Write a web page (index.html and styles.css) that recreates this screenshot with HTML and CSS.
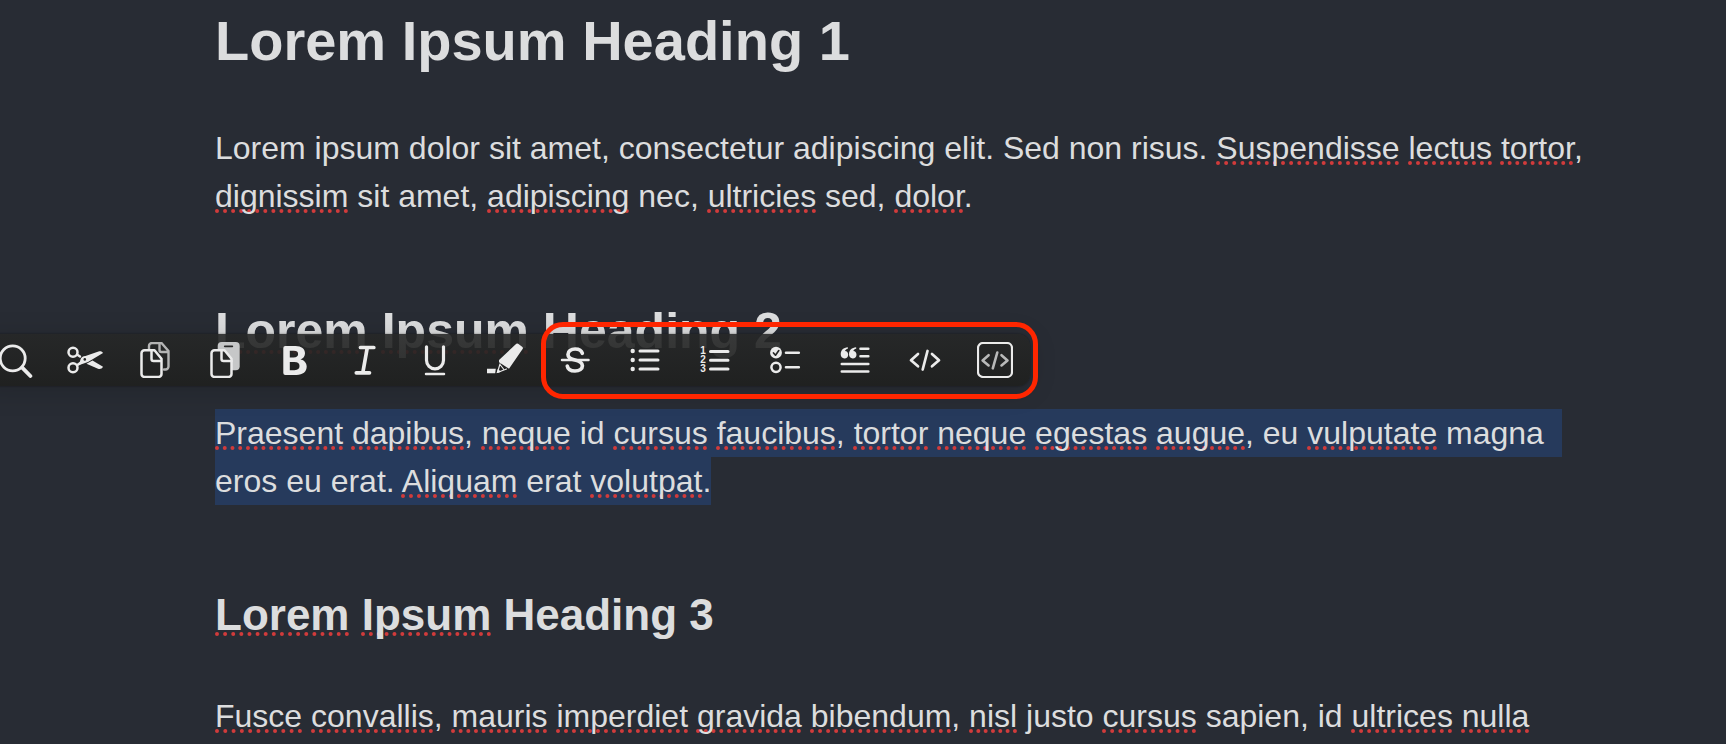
FILE: index.html
```html
<!DOCTYPE html>
<html lang="en">
<head>
<meta charset="utf-8">
<title>Lorem Ipsum</title>
<link rel="stylesheet" href="styles.css">
</head>
<body>
<main class="note">
  <h1>Lorem Ipsum Heading 1</h1>
  <p>Lorem ipsum dolor sit amet, consectetur adipiscing elit. Sed non risus. <span class="sp">Suspendisse</span> <span class="sp">lectus</span> <span class="sp">tortor</span>, <span class="sp">dignissim</span> sit amet, <span class="sp">adipiscing</span> nec, <span class="sp">ultricies</span> sed, <span class="sp">dolor</span>.</p>
  <section class="anchor">
    <h2><span class="sp">Lorem</span> <span class="sp">Ipsum</span> Heading 2</h2>
    <div class="toolbar" role="toolbar" aria-label="Formatting">
      <button type="button" aria-label="Search"><svg viewBox="0 0 36 36"><circle cx="15.7" cy="16.3" r="12.5" stroke-width="2.8"/><path d="M25.2 25.6l8.2 8.4" stroke-width="3.8"/></svg></button>
      <button type="button" aria-label="Cut"><svg viewBox="0 0 36 36"><circle cx="6" cy="10.3" r="4.5" stroke-width="2.5"/><circle cx="6" cy="25.7" r="4.5" stroke-width="2.5"/><path d="M10 12.6l3 2M10 23.2l5-3.400" stroke-width="2.4"/><path class="fill" d="M13.5 17.6C14 15.3 16 14 18.500 14L31.500 9.500C33.500 9 35.300 9.500 36 11L21 20 14.500 22.300 11.500 23.500 12.500 20.800z"/><path class="fill" d="M19.500 21.700L25.500 18.500 36 24.800C35 26.800 33 27.300 31 26.700z"/><circle cx="17.800" cy="17.400" r="1.300" class="dark"/></svg></button>
      <button type="button" aria-label="Copy"><svg viewBox="0 0 36 36"><g opacity=".72"><path d="M12 7V4a3 3 0 0 1 3-3h9.500l7 8v15.500a3 3 0 0 1-3 3H27M22.500 2v6a2 2 0 0 0 2 2h6" stroke-width="2.400"/></g><path d="M7.500 8.300h10l7 8.500V32a3 3 0 0 1-3 3h-14a3 3 0 0 1-3-3V11.300a3 3 0 0 1 3-3zM14.500 9v8a2 2 0 0 0 2 2h8" stroke-width="2.500"/></svg></button>
      <button type="button" aria-label="Paste"><svg viewBox="0 0 36 36"><rect x="10.700" y="0" width="22" height="28.300" rx="4" class="soft"/><path d="M17.800 4.300h7.500" class="darkline" stroke-width="1.800"/><path d="M7.500 8.300h10l7 8.500V32a3 3 0 0 1-3 3h-14a3 3 0 0 1-3-3V11.300a3 3 0 0 1 3-3z" class="panel" stroke-width="2.500"/><path d="M14.500 9v8a2 2 0 0 0 2 2h8" stroke-width="2.500"/></svg></button>
      <button type="button" aria-label="Bold"><svg viewBox="0 0 36 36"><path class="fill" fill-rule="evenodd" d="M8.300 4H18.500C24.500 4 28 7 28 11.300c0 3-1.800 5.300-4.600 6.200 3.900.6 6.300 3.500 6.300 7.100 0 5.200-3.800 8.400-10.200 8.400H8.300a2 2 0 0 1-2-2V6a2 2 0 0 1 2-2zM12.800 8.700v6.800h3.700c3.200 0 4.600-1.200 4.600-3.500 0-2.200-1.400-3.300-4.200-3.300zM12.800 20v8.200h4.700c3.500 0 5-1.400 5-4.100 0-2.800-1.600-4.100-5.200-4.100z"/></svg></button>
      <button type="button" aria-label="Italic"><svg viewBox="0 0 36 36"><path d="M13.500 5.500h13.300M9.300 30.800h13.200M20.300 5.500l-4.500 25.300" stroke-width="3.700"/></svg></button>
      <button type="button" aria-label="Underline"><svg viewBox="0 0 36 36"><path d="M9.500 4.800v13.500a8.500 8.500 0 0 0 17 0V4.800" stroke-width="3.200"/><path d="M9 31.900h18" stroke-width="2.500"/></svg></button>
      <button type="button" aria-label="Highlight"><svg viewBox="0 0 36 36"><path class="fill" d="M29.300 1.800q.9-.8 1.900 0l4.200 3.300q.9.900.2 1.900L22 26.700 12 20.300V18zM0 26.800h8.800l-.6 4.500H0z"/><path d="M13 21.800l-2.500 8.700L19.500 27M13 22.500l3.500 4.500" stroke-width="1.200"/><path class="fill" d="M9.500 31.300l1.300-4.300 3.400 2.800z"/></svg></button>
      <button type="button" aria-label="Strikethrough"><svg viewBox="0 0 36 36"><path d="M25.300 11.300C24.600 8.700 21.800 7 18.200 7c-4.200 0-7.200 2.100-7.200 5.400 0 3.300 2.800 4.600 7 5.600 4.600 1.100 7.400 2.400 7.400 5.700S22.300 29 18 29c-4.200 0-7.200-1.900-7.700-5" stroke-width="3.700"/><path d="M5 18h26.500" stroke-width="2.500"/></svg></button>
      <button type="button" aria-label="Bullet list"><svg viewBox="0 0 36 36"><path d="M13 9h18M13 18h18M13 27h18" stroke-width="3"/><g class="fill"><circle cx="5.700" cy="9" r="2.200"/><circle cx="5.700" cy="18" r="2.200"/><circle cx="5.700" cy="27" r="2.200"/></g></svg></button>
      <button type="button" aria-label="Numbered list"><svg viewBox="0 0 36 36"><path d="M13.500 9.500h17.500M13.500 18.300h17.500M13.500 27h17.500" stroke-width="3"/><g class="digits"><text x="6" y="12">1</text><text x="6" y="21">2</text><text x="6" y="30">3</text></g></svg></button>
      <button type="button" aria-label="Task list"><svg viewBox="0 0 36 36"><circle class="fill" cx="9" cy="10.700" r="5.900"/><path class="darkline" d="M6.500 11l2 2.200 3.300-4.600" stroke-width="1.700"/><circle cx="9" cy="25.300" r="4.600" stroke-width="2.500"/><path d="M19 10.700h12.800M19 25.300h12.800" stroke-width="2.600"/></svg></button>
      <button type="button" aria-label="Quote"><svg viewBox="0 0 36 36"><path d="M23.500 6.700h7.800M23.500 14.300h7.800M4.800 22h26.500M4.800 29.500h26.500" stroke-width="2.600"/><path id="quote-mark" class="fill" d="M10.800 5.300C6.500 5.600 3.700 8.300 3.700 12.300c0 2.500 1.600 4.100 3.700 4.100 2.200 0 3.800-1.600 3.800-3.700 0-2-1.300-3.500-3.200-3.600.4-1.200 1.400-2 3-2.500z"/><use href="#quote-mark" x="8.300"/></svg></button>
      <button type="button" aria-label="Code"><svg viewBox="0 0 36 36"><path d="M11 12l-7 6.300 7 6M25 12l7 6.300-7 6M20.500 9l-4.800 18.500" stroke-width="2.700"/></svg></button>
      <button type="button" aria-label="Code block"><svg viewBox="0 0 36 36"><rect x="1" y="1" width="34" height="34" rx="5" stroke-width="2.200"/><path opacity=".75" d="M11.600 13.200l-6 5.200 6 5M24.500 13.200l6 5.200-6 5M20.300 10.500l-4.500 15.800" stroke-width="2.600"/></svg></button>
      <div class="mark"></div>
    </div>
  </section>
  <p class="selected"><span class="row wrap"><span class="sp">Praesent</span> <span class="sp">dapibus</span>, <span class="sp">neque</span> id <span class="sp">cursus</span> <span class="sp">faucibus</span>, <span class="sp">tortor</span> <span class="sp">neque</span> <span class="sp">egestas</span> <span class="sp">augue</span>, eu <span class="sp">vulputate</span> magna </span><span class="row">eros eu erat. <span class="sp">Aliquam</span> erat <span class="sp">volutpat</span>.</span></p>
  <h3><span class="sp">Lorem</span> <span class="sp">Ipsum</span> Heading 3</h3>
  <p><span class="sp">Fusce</span> <span class="sp">convallis</span>, <span class="sp">mauris</span> <span class="sp">imperdiet</span> <span class="sp">gravida</span> <span class="sp">bibendum</span>, <span class="sp">nisl</span> justo <span class="sp">cursus</span> sapien, id <span class="sp">ultrices</span> <span class="sp">nulla</span></p>
</main>
</body>
</html>
```
FILE: styles.css
```css
* {
  box-sizing: border-box;
}

html {
  background: #282c34;
}

body {
  margin: 0;
  overflow: hidden;
  color: #dcddde;
  font-family: "Liberation Sans", Arial, sans-serif;
  font-size: 32px;
  line-height: 48px;
}

.note {
  padding: 7px 128px 0 215px;
}

h1,
h2,
h3,
p {
  margin: 0;
}

h1 {
  font-size: 56px;
  line-height: 68px;
  margin-bottom: 49px;
}

h2 {
  font-size: 50px;
  line-height: 60px;
  margin: 81px 0 48px;
}

h3 {
  font-size: 44px;
  line-height: 56px;
  margin: 82px 0 49px;
}

.anchor {
  display: flow-root;
}

.sp {
  text-decoration: underline dotted #d13b3b 4px;
  text-underline-offset: 2px;
  text-decoration-skip-ink: none;
}

.row {
  display: block;
  width: fit-content;
  background: #263a5c;
}

.wrap {
  padding-right: 18px;
}

.toolbar {
  position: absolute;
  left: -20px;
  top: 334px;
  display: flex;
  border-radius: 0 12px 12px 0;
  background: linear-gradient(rgba(38, 39, 39, 0.9), rgba(31, 32, 31, 0.93));
  box-shadow: 0 0 2px rgba(0, 0, 0, 0.5), 0 4px 28px rgba(0, 0, 0, 0.16);
}

.toolbar button {
  display: flex;
  align-items: center;
  justify-content: center;
  width: 70px;
  height: 52px;
  padding: 0;
  border: 0;
  background: none;
}

.toolbar svg {
  width: 36px;
  height: 36px;
  fill: none;
  stroke: #ebebeb;
  stroke-linecap: round;
  stroke-linejoin: round;
}

.toolbar .fill {
  fill: #ebebeb;
  stroke: none;
}

.toolbar .soft {
  fill: #c6c7c8;
  stroke: none;
}

.toolbar .dark {
  fill: #262727;
  stroke: none;
}

.toolbar .darkline {
  stroke: #262727;
}

.toolbar .panel {
  fill: #262727;
}

.toolbar .digits {
  fill: #ebebeb;
  stroke: none;
  font-size: 10px;
  font-weight: 700;
  text-anchor: middle;
}

.mark {
  position: absolute;
  top: -12px;
  right: -8px;
  bottom: -13px;
  width: 497px;
  border: 5px solid #ff2600;
  border-radius: 22px;
  pointer-events: none;
}
```
